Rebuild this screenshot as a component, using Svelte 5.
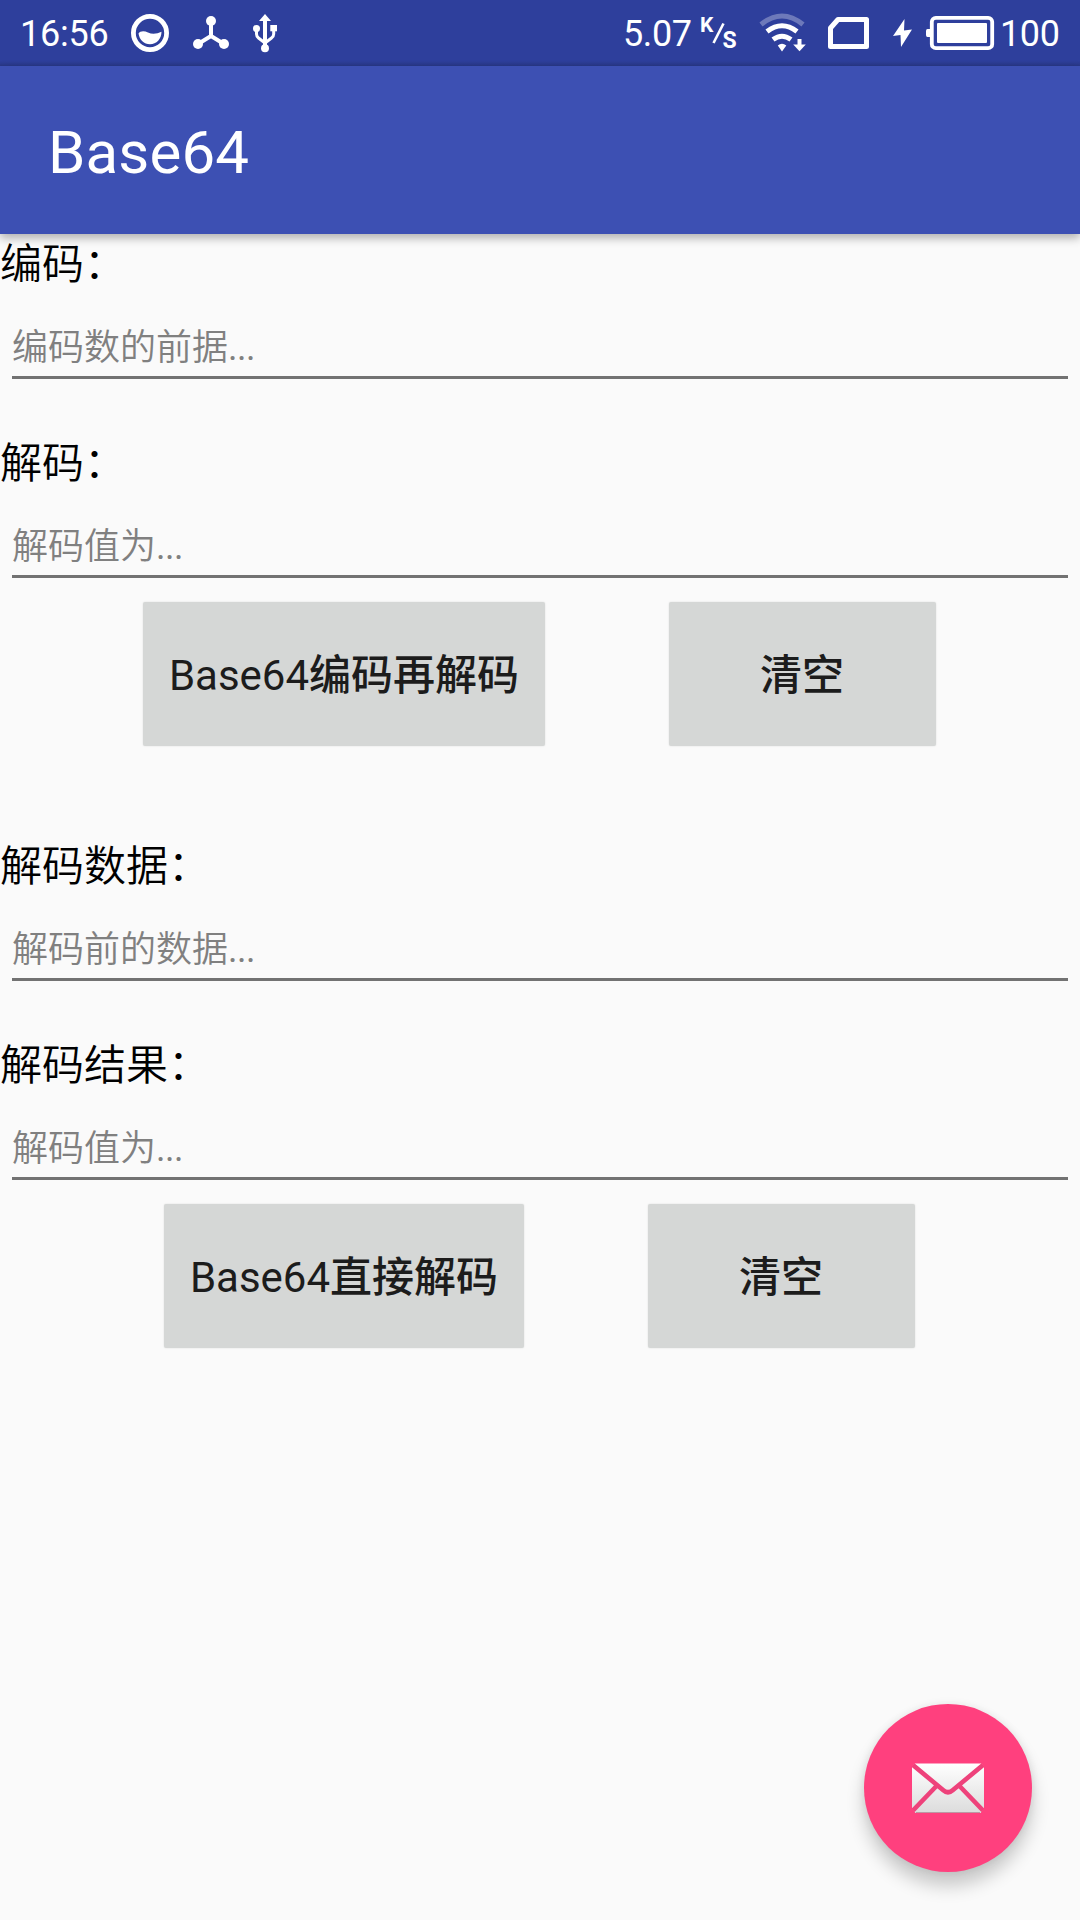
<script>
  const groups = [
    {
      fields: [
        { label: '编码：', hint: '编码数的前据' },
        { label: '解码：', hint: '解码值为' },
      ],
      latin: 'Base64',
      action: '编码再解码',
    },
    {
      fields: [
        { label: '解码数据：', hint: '解码前的数据' },
        { label: '解码结果：', hint: '解码值为' },
      ],
      latin: 'Base64',
      action: '直接解码',
    },
  ];
</script>

<div class="screen">
  <header class="status">
    <div class="side">
      <span class="clock">16:56</span>
      <svg class="ball" width="40" height="65" viewBox="130 0 40 65">
        <circle cx="150" cy="33" r="16.6" fill="none" stroke="#fff" stroke-width="4.8" />
        <path d="M138.5 33.5C140 31 144 30.5 148 32.5C152 34.5 157 34 161.5 31.8C161.500 39 156.500 44.300 150 44.300C144 44.300 139.500 40 138.500 33.500Z" fill="#fff" />
      </svg>
      <svg class="hub" width="40" height="65" viewBox="191 0 40 65">
        <path d="M211 21V36M211 36L198 44M211 36L224 44" stroke="#fff" stroke-width="4" fill="none" />
        <circle cx="211" cy="21" r="5" fill="#fff" />
        <circle cx="198" cy="44" r="5" fill="#fff" />
        <circle cx="224" cy="44" r="5" fill="#fff" />
      </svg>
      <svg class="usb" width="30" height="65" viewBox="250 0 30 65">
        <path d="M265 18V48" stroke="#fff" stroke-width="4" />
        <path d="M256.500 29V34Q256.500 36.500 258.500 38L265 43M273.700 28V34Q273.700 36.500 271.500 38L265 43" stroke="#fff" stroke-width="3" fill="none" />
        <path d="M265 14L271 21H259Z" fill="#fff" />
        <circle cx="256.500" cy="28.500" r="3.500" fill="#fff" />
        <rect x="270.300" y="25" width="6.700" height="6.300" fill="#fff" />
        <circle cx="265" cy="48.200" r="4" fill="#fff" />
      </svg>
    </div>
    <div class="side">
      <span class="speed">5.07</span>
      <span class="unit"><i class="kilo">K</i><svg width="14" height="65" viewBox="713 0 14 65"><path d="M724.500 23.500L714.500 43" stroke="#fff" stroke-width="2.600" /></svg><i class="sec">S</i></span>
      <svg class="wifi" width="50" height="65" viewBox="758 0 50 65">
        <g fill="none" stroke="#fff">
          <path d="M761 24.500Q782 7.500 803 24.500" stroke-width="5" opacity=".3" />
          <path d="M767 31.500Q782 20 797 31.500" stroke-width="5" />
          <path d="M773 39.500Q782 33 791 39.500" stroke-width="5" />
          <path d="M799.500 39V46" stroke-width="4" />
        </g>
        <path d="M777.800 45.500Q782 41.800 786.300 45.500L782 51.500Z" fill="#fff" />
        <path d="M793.200 44.500H805.800L799.500 51.200Z" fill="#fff" />
      </svg>
      <svg class="sim" width="46" height="65" viewBox="825 0 46 65">
        <path d="M838 19.500H866.500V46.500H830.500V28Z" fill="none" stroke="#fff" stroke-width="5" stroke-linejoin="round" />
      </svg>
      <svg class="bolt" width="22" height="65" viewBox="892 0 22 65">
        <path d="M904.500 19L893 36L900.500 35L901 47L912 29.500L904 30.500Z" fill="#fff" />
      </svg>
      <svg class="battery" width="70" height="65" viewBox="925 0 70 65">
        <rect x="931.800" y="17.800" width="60.400" height="30.400" rx="4" fill="none" stroke="#fff" stroke-width="3.800" />
        <rect x="937" y="23" width="50" height="20" rx="1" fill="#fff" />
        <path d="M931 29H927.500Q926 29 926 31V35Q926 37 927.500 37H931Z" fill="#fff" />
      </svg>
      <span class="percent">100</span>
    </div>
  </header>

  <div class="appbar"><h1>Base64</h1></div>

  <main>
    {#each groups as group}
      <section>
        {#each group.fields as field}
          <div class="field">
            <div class="label">{field.label}</div>
            <div class="input">{field.hint}<span class="dots">...</span></div>
          </div>
        {/each}
        <div class="actions">
          <button><span class="latin">{group.latin}</span>{group.action}</button>
          <button class="clear">清空</button>
        </div>
      </section>
    {/each}
  </main>

  <button class="fab" aria-label="mail">
    <svg width="72" height="52" viewBox="0 0 72 52">
      <defs>
        <linearGradient id="paper" x1="0" y1="0" x2="0" y2="1" gradientUnits="objectBoundingBox">
          <stop offset="0" stop-color="#fff" />
          <stop offset="1" stop-color="#dcdcdc" />
        </linearGradient>
      </defs>
      <rect x="0" y="1.500" width="72" height="49.500" fill="url(#paper)" />
      <path d="M4 50.500H68" stroke="#a76b7e" stroke-opacity=".6" stroke-width="1" />
      <path d="M1 3L31 28Q36 32.500 41 28L71 3M24 24.500L1 48.500M48 24.500L71 48.500" fill="none" stroke="#ee427b" stroke-width="4.600" />
      <path d="M0 0H4L0 5ZM72 0H68L72 5ZM0 52H4L0 46ZM72 52H68L72 46Z" fill="#ff407e" />
    </svg>
  </button>
</div>

<style>
  :global(body) { margin: 0; background: #fafafa; }
  .screen {
    position: relative;
    width: 1080px;
    height: 1920px;
    overflow: hidden;
    background: #fafafa;
    font-family: Roboto, "Noto Sans CJK SC", sans-serif;
  }
  .status {
    display: flex;
    justify-content: space-between;
    height: 66px;
    background: linear-gradient(#2e3f9c 61px, #293888 66px);
    color: #fff;
    font-size: 36px;
    line-height: 69px;
  }
  .side { display: flex; }
  .side svg { display: block; flex: none; }
  .clock { width: 110px; padding-left: 20px; letter-spacing: -.2px; }
  .hub { margin-left: 21px; }
  .usb { margin-left: 19px; }
  .speed { width: 77px; letter-spacing: -.4px; }
  .unit { display: flex; width: 58px; }
  i { font-style: normal; font-weight: 700; line-height: 1; }
  .kilo { width: 12px; font-size: 21px; padding-top: 15px; }
  .sec { font-size: 23px; padding-top: 29px; margin-left: -3.500px; }
  .sim { margin-left: 17px; }
  .bolt { margin-left: 21px; }
  .battery { margin-left: 11px; }
  .percent { width: 80px; padding-left: 5px; letter-spacing: -.4px; }
  .appbar {
    position: relative;
    display: flex;
    align-items: center;
    height: 168px;
    padding-left: 48px;
    box-sizing: border-box;
    background: #3d50b3;
    box-shadow: 0 4px 9px rgba(0, 0, 0, .3);
  }
  h1 { margin: 5px 0 0; font-size: 60px; font-weight: 400; line-height: 70px; letter-spacing: .15px; color: #fff; }
  section { height: 602px; }
  .field { height: 199px; }
  .field + .field { height: 169px; }
  .label { height: 57px; line-height: 61px; font-size: 42px; font-weight: 350; color: #000; }
  .input {
    height: 85px;
    margin: 0 12px;
    border-bottom: 3px solid #727272;
    font-size: 36px;
    line-height: 115px;
    color: #808080;
    font-weight: 350;
  }
  .dots { font-weight: 400; letter-spacing: -.5px; }
  .actions { display: flex; justify-content: center; gap: 124px; padding-right: 1px; }
  button { border: 0; font-family: inherit; }
  .actions button {
    height: 144px;
    padding: 0 25.500px 6px;
    border-radius: 2px;
    background: #d5d7d6;
    box-shadow: 0 0 2px rgba(0, 0, 0, .12);
    color: #1c1c1c;
    font-size: 42px;
    font-weight: 500;
  }
  .latin { font-weight: 400; }
  .actions .clear { width: 267px; }
  .fab {
    position: absolute;
    left: 864px;
    top: 1704px;
    display: flex;
    align-items: center;
    justify-content: center;
    width: 168px;
    height: 168px;
    padding: 0;
    border-radius: 50%;
    background: #ff407e;
    box-shadow: 0 14px 18px rgba(0, 0, 0, .2), 0 0 9px rgba(0, 0, 0, .08);
  }
</style>
